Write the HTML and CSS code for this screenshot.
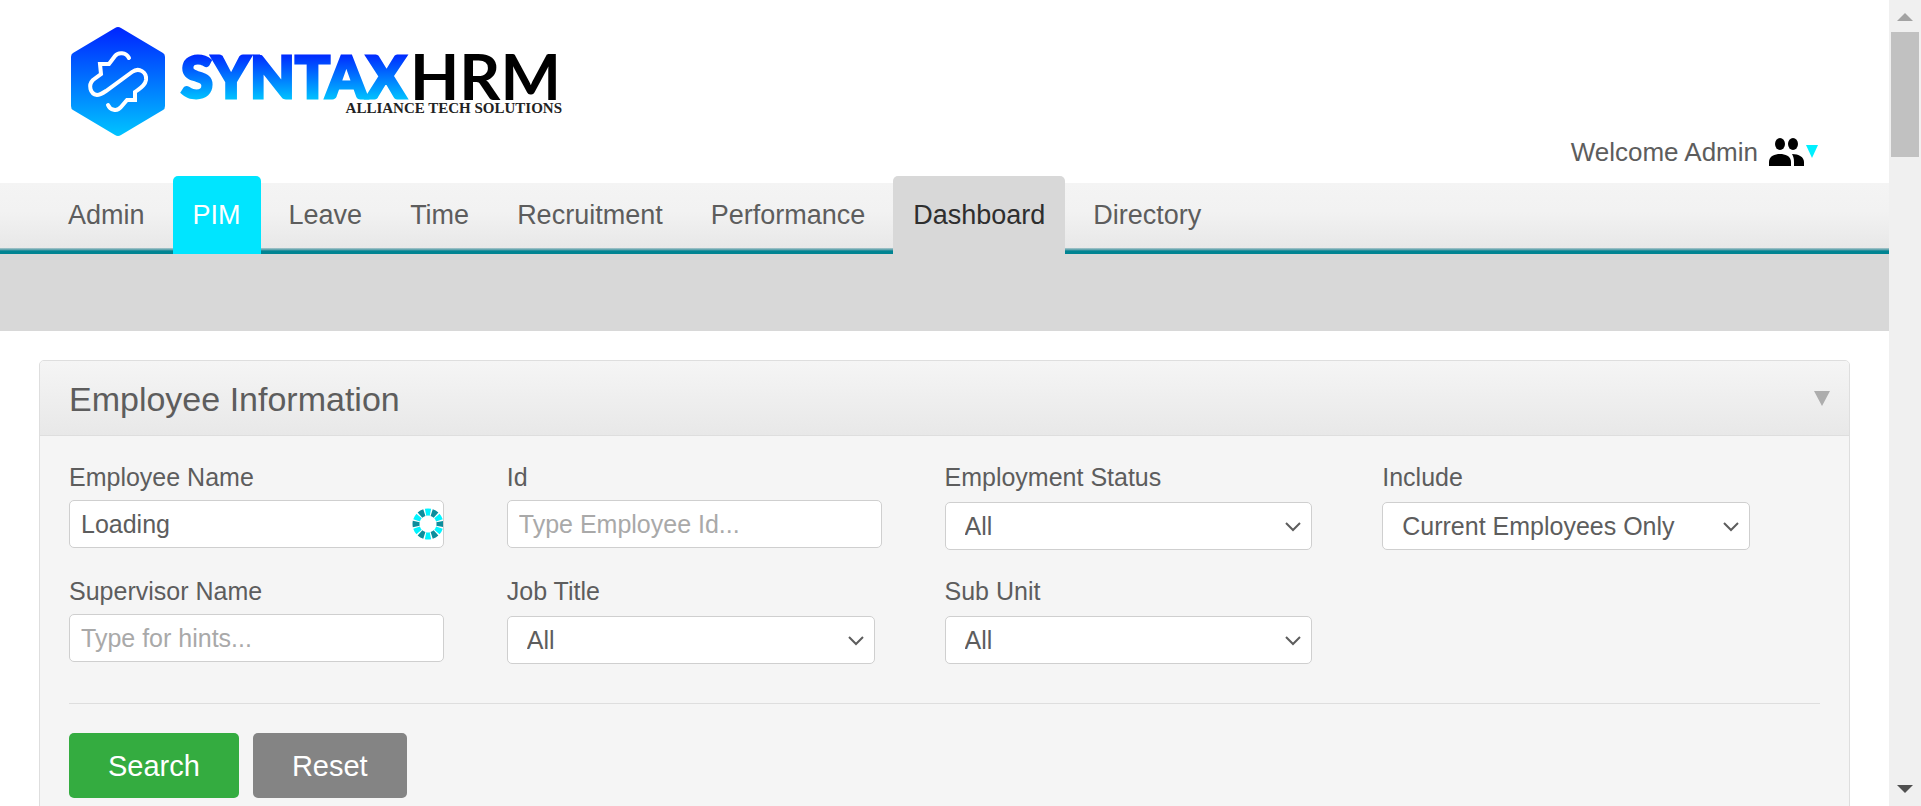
FILE: index.html
```html
<!DOCTYPE html>
<html lang="en">
<head>
<meta charset="utf-8">
<title>SyntaxHRM - Employee Information</title>
<link rel="stylesheet" href="styles.css">
</head>
<body>
<div class="page">
  <header class="branding">
    <a class="logo" href="#" aria-label="SyntaxHRM home">
      <svg width="496" height="112" viewBox="0 0 496 112">
        <defs>
          <linearGradient id="hexFill" x1="0" y1="0" x2="0" y2="1">
            <stop offset="0" stop-color="#0024ff"/>
            <stop offset="1" stop-color="#00c4ff"/>
          </linearGradient>
          <linearGradient id="wordFill" gradientUnits="userSpaceOnUse" x1="0" y1="27" x2="0" y2="74">
            <stop offset="0" stop-color="#0024ff"/>
            <stop offset="1" stop-color="#00c4ff"/>
          </linearGradient>
        </defs>
        <path fill="url(#hexFill)" d="M45 2Q48 0 51 2L93 27Q95 28 95 31V80Q95 83 93 84L51 109Q48 111 45 109L3 84Q1 83 1 80V31Q1 28 3 27Z"/>
        <path fill="none" stroke="#fff" stroke-width="4" stroke-linecap="round" stroke-linejoin="miter" d="M59 32C56 26 48 26 45 30L39 38H30L31 48L23 54C18 59 20 68 27 69C30 69 33 67 36 65L62 46C69 41 77 46 76 54C75 60 70 62 65 66V74H57L51 81C47 86 40 84 38 79"/>
        <text class="logo-syntax" x="111" y="72">SYNTAX</text>
        <text class="logo-hrm" x="340" y="74">HRM</text>
        <text class="logo-tagline" x="492" y="87" text-anchor="end">ALLIANCE TECH SOLUTIONS</text>
      </svg>
    </a>
    <a class="welcome" href="#">
      <span>Welcome Admin</span>
      <svg width="50" height="32" viewBox="0 0 50 32" aria-hidden="true">
        <ellipse cx="12" cy="8" rx="5" ry="6"/>
        <ellipse cx="25" cy="8" rx="5" ry="6"/>
        <path d="M1 30V26C1 20 7 18 12 18S23 20 23 26V30Z"/>
        <path d="M24 18C31 18 36 21 36 26V30H26V26C26 22 25 20 24 18Z"/>
        <path fill="#00f0ff" d="M38 9H50L44 22Z"/>
      </svg>
    </a>
  </header>

  <nav class="menu">
    <a class="tab" href="#">Admin</a>
    <a class="tab tab-current" href="#">PIM</a>
    <a class="tab" href="#">Leave</a>
    <a class="tab" href="#">Time</a>
    <a class="tab" href="#">Recruitment</a>
    <a class="tab" href="#">Performance</a>
    <a class="tab tab-open" href="#">Dashboard</a>
    <a class="tab" href="#">Directory</a>
  </nav>
  <div class="submenu"></div>

  <main class="panel">
    <div class="panel-head">
      <h1>Employee Information</h1>
      <button class="toggle" type="button" aria-label="Collapse">
        <svg width="16" height="16" viewBox="0 0 16 16"><path fill="#adadad" d="M0 0H16L8 15Z"/></svg>
      </button>
    </div>
    <form class="search">
      <div class="fields">
        <div class="field">
          <label for="empName">Employee Name</label>
          <div class="control">
            <input id="empName" type="text" value="Loading">
            <svg class="spinner" width="31" height="32" viewBox="0 0 31 32" aria-hidden="true">
              <g fill="none" stroke-width="7">
                <circle cx="16" cy="16" r="12" pathLength="120" stroke="#00f4ff" stroke-dasharray="8 12" stroke-dashoffset="-6"/>
                <circle cx="16" cy="16" r="12" pathLength="120" stroke="#0c8d9c" stroke-dasharray="8 12" stroke-dashoffset="4"/>
              </g>
            </svg>
          </div>
        </div>
        <div class="field">
          <label for="empId">Id</label>
          <input id="empId" type="text" placeholder="Type Employee Id...">
        </div>
        <div class="field">
          <label for="status">Employment Status</label>
          <div class="control choice">
            <select id="status"><option>All</option></select>
            <svg class="chevron" width="16" height="10" viewBox="0 0 16 10"><path d="M1 1L8 8L15 1"/></svg>
          </div>
        </div>
        <div class="field">
          <label for="include">Include</label>
          <div class="control choice">
            <select id="include"><option>Current Employees Only</option></select>
            <svg class="chevron" width="16" height="10" viewBox="0 0 16 10"><path d="M1 1L8 8L15 1"/></svg>
          </div>
        </div>
        <div class="field">
          <label for="supervisor">Supervisor Name</label>
          <input id="supervisor" type="text" placeholder="Type for hints...">
        </div>
        <div class="field">
          <label for="job">Job Title</label>
          <div class="control choice">
            <select id="job"><option>All</option></select>
            <svg class="chevron" width="16" height="10" viewBox="0 0 16 10"><path d="M1 1L8 8L15 1"/></svg>
          </div>
        </div>
        <div class="field">
          <label for="unit">Sub Unit</label>
          <div class="control choice">
            <select id="unit"><option>All</option></select>
            <svg class="chevron" width="16" height="10" viewBox="0 0 16 10"><path d="M1 1L8 8L15 1"/></svg>
          </div>
        </div>
      </div>
      <div class="actions">
        <button class="btn btn-search" type="button">Search</button>
        <button class="btn btn-reset" type="button">Reset</button>
      </div>
    </form>
  </main>
</div>
<div class="scrollbar" aria-hidden="true">
  <svg width="16" height="8" viewBox="0 0 16 8"><path fill="#a3a3a3" d="M0 8L8 0L16 8Z"/></svg>
  <div class="thumb"></div>
  <svg width="16" height="8" viewBox="0 0 16 8"><path fill="#505050" d="M0 0H16L8 8Z"/></svg>
</div>
</body>
</html>
```
FILE: styles.css
```css
* {
  box-sizing: border-box;
}

body {
  margin: 0;
  display: flex;
  height: 100vh;
  overflow: hidden;
  background: #fff;
  color: #5d5d5d;
  font-family: "Liberation Sans", Arial, sans-serif;
  font-size: 25px;
  line-height: 30px;
}

a {
  color: inherit;
  text-decoration: none;
}

.page {
  flex: 1;
  min-width: 0;
  overflow: hidden;
}

/* Branding */
.branding {
  display: flex;
  justify-content: space-between;
  align-items: flex-end;
  height: 183px;
  padding: 26px 71px 15px 70px;
}

.logo {
  align-self: flex-start;
}

.logo svg {
  display: block;
}

.logo-syntax {
  font: 900 58px Lato, sans-serif;
  fill: url(#wordFill);
  stroke: url(#wordFill);
  stroke-width: 3px;
}

.logo-hrm {
  font: 700 64px Lato, sans-serif;
  fill: #000;
}

.logo-tagline {
  font: 700 15px "Liberation Serif", serif;
  fill: #222;
}

.welcome {
  display: flex;
  align-items: center;
  gap: 10px;
  font-size: 26px;
}

.welcome svg {
  fill: #000;
}

/* Menu */
.menu {
  display: flex;
  gap: 8px;
  height: 71px;
  padding-left: 48px;
  background:
    linear-gradient(#b0c9cd, #4f9ba6 2px, #008492 3px) bottom / 100% 6px no-repeat,
    linear-gradient(#f4f4f4, #f2f2f2 40%, #e6e6e6);
}

.tab {
  height: 78px;
  margin-top: -7px;
  padding: 0 20px;
  border-radius: 5px 5px 0 0;
  font-size: 27px;
  line-height: 78px;
}

.tab-current {
  background: #00e5ff;
  color: #fff;
}

.tab-open {
  background: #d8d8d8;
  color: #2e2e2e;
}

.submenu {
  height: 77px;
  background: #d8d8d8;
}

/* Search panel */
.panel {
  margin: 29px 39px;
  border: 1px solid #dedede;
  border-radius: 5px;
  background: #f5f5f5;
}

.panel-head {
  display: flex;
  justify-content: space-between;
  align-items: center;
  height: 75px;
  padding: 2px 19px 0 29px;
  border-bottom: 1px solid #dedede;
  border-radius: 4px 4px 0 0;
  background: linear-gradient(#f5f5f5, #e8e8e8);
}

h1 {
  margin: 0;
  font-size: 34px;
  font-weight: 400;
}

.toggle {
  display: flex;
  padding: 0;
  border: 0;
  background: none;
}

.search {
  padding: 26px 29px 40px;
}

.fields {
  display: grid;
  grid-template-columns: repeat(4, 1fr);
  row-gap: 26px;
  padding-bottom: 39px;
  border-bottom: 1px solid #dedede;
}

.field {
  padding-right: 63px;
}

label {
  display: block;
  margin-bottom: 8px;
}

.control {
  position: relative;
}

.choice {
  margin: 10px 7px 0 0;
}

input,
select {
  display: block;
  width: 100%;
  height: 48px;
  border: 1px solid #cfcfcf;
  border-radius: 5px;
  background: #fff;
  color: inherit;
  font: inherit;
}

input {
  padding: 0 11px;
}

input::placeholder {
  color: #a9a9a9;
}

select {
  appearance: none;
  padding: 0 40px 0 19px;
}

.chevron {
  position: absolute;
  right: 11px;
  top: 20px;
  fill: none;
  stroke: #5d5d5d;
  stroke-width: 2;
  pointer-events: none;
}

.spinner {
  position: absolute;
  right: 1px;
  top: 8px;
}

.actions {
  display: flex;
  gap: 14px;
  padding-top: 29px;
}

.btn {
  height: 65px;
  padding: 0 39px;
  border: 0;
  border-radius: 5px;
  color: #fff;
  font: inherit;
  font-size: 29px;
}

.btn-search {
  background: #34ac40;
}

.btn-reset {
  background: #848484;
}

/* Window scrollbar */
.scrollbar {
  display: flex;
  flex-direction: column;
  align-items: center;
  width: 32px;
  padding: 13px 2px;
  background: #f0f0f0;
}

.thumb {
  width: 100%;
  height: 125px;
  margin: 11px 0 auto;
  background: #c1c1c1;
}
```
